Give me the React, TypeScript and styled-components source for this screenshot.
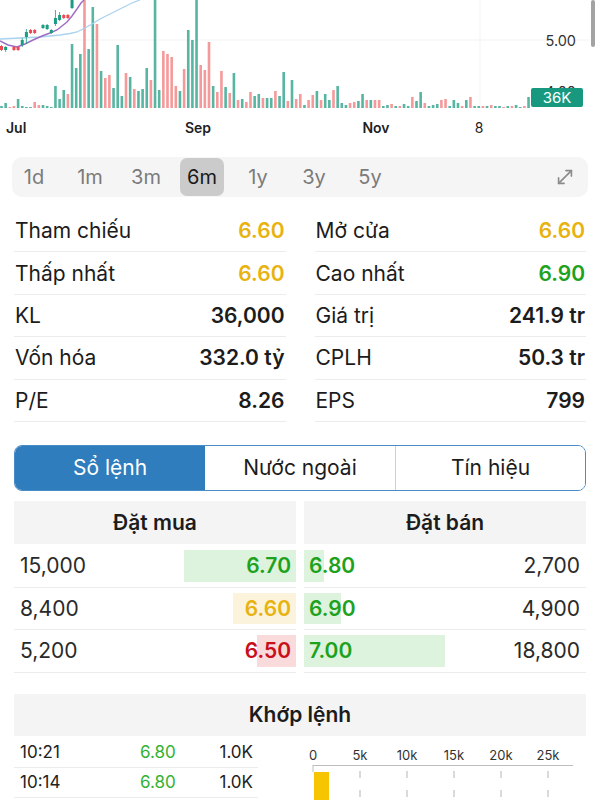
import React from "react";
import styled, { createGlobalStyle } from "styled-components";
import { MoveDiagonal } from "lucide-react";

const GlobalStyle = createGlobalStyle`
  html, body { margin: 0; padding: 0; background: #ffffff; }
  body { font-family: Inter, "Noto Sans", "Liberation Sans", sans-serif; color: #1c1c1c; }
  * { box-sizing: border-box; }
`;

const C = {
  yellow: "#e8b20f",
  green: "#1ea21e",
  red: "#c8101c",
  text: "#1c1c1c",
  line: "#ececec",
  head: "#f4f4f4",
  blue: "#2f7dbd",
};

const Page = styled.div`
  width: 600px;
  display: flex;
  flex-direction: column;
`;

/* ---------- Chart ---------- */
const ChartWrap = styled.div`
  position: relative;
  height: 145px;
`;

const VolBadge = styled.div`
  position: absolute;
  left: 531px;
  top: 88px;
  width: 52px;
  height: 19px;
  background: #18997f;
  color: #ffffff;
  border-radius: 2px;
  font-size: 15px;
  line-height: 19px;
  text-align: center;
`;

const ScrollThumb = styled.div`
  position: absolute;
  left: 591px;
  top: 0;
  width: 4px;
  height: 47px;
  border-radius: 2px;
  background: #a3a3a3;
`;

type Bar = [number, "g" | "r"];
const VOL: Bar[] = [
  [2, "g"], [5, "g"], [1, "r"], [2, "r"], [9, "g"], [2, "g"], [1, "g"], [1, "g"], [6, "r"], [3, "r"], [3, "g"], [2, "g"], [1, "g"],
  [22, "g"], [9, "g"], [18, "g"], [14, "r"], [64, "g"], [40, "g"], [54, "g"], [130, "r"], [59, "g"], [101, "g"],
  [84, "r"], [37, "g"], [30, "r"], [33, "r"], [20, "g"], [63, "g"], [12, "g"], [35, "r"], [31, "g"], [19, "r"],
  [17, "g"], [19, "g"], [40, "g"], [28, "r"], [130, "g"], [18, "g"], [57, "r"], [54, "r"], [51, "r"], [22, "r"],
  [17, "g"], [39, "r"], [78, "g"], [68, "g"], [130, "g"], [43, "r"], [38, "r"], [66, "r"], [22, "g"], [16, "r"],
  [37, "r"], [21, "g"], [15, "r"], [35, "g"], [8, "r"], [9, "g"], [6, "r"], [16, "r"], [12, "g"], [14, "g"],
  [10, "r"], [10, "g"], [10, "g"], [17, "r"], [12, "g"], [36, "g"], [7, "r"], [28, "g"], [9, "r"], [14, "r"],
  [3, "g"], [8, "r"], [13, "r"], [17, "g"], [8, "r"], [14, "g"], [8, "g"], [18, "r"], [22, "g"], [5, "g"],
  [3, "g"], [5, "r"], [6, "r"], [7, "g"], [14, "g"], [8, "r"], [8, "g"], [8, "r"], [8, "r"], [2, "g"],
  [3, "g"], [4, "r"], [2, "g"], [2, "r"], [4, "g"], [2, "g"], [11, "r"], [7, "g"], [16, "g"], [5, "r"],
  [2, "g"], [3, "g"], [4, "g"], [8, "r"], [9, "r"], [2, "g"], [8, "g"], [5, "g"], [2, "r"], [8, "g"],
  [11, "r"], [2, "g"], [2, "g"], [2, "r"], [2, "g"], [3, "r"], [2, "g"], [2, "g"], [1, "r"], [2, "g"],
  [2, "r"], [3, "g"], [1, "g"], [2, "r"], [11, "g"],
];

type Candle = { i: number; o: number; c: number; h: number; l: number; up: boolean };
const CANDLES: Candle[] = [
  { i: 0, o: 46, c: 50, h: 45, l: 51, up: false },
  { i: 1, o: 50, c: 47, h: 46, l: 52, up: true },
  { i: 3, o: 47, c: 50, h: 46, l: 51, up: false },
  { i: 4, o: 47, c: 50, h: 46, l: 51, up: false },
  { i: 5, o: 45, c: 40, h: 38, l: 47, up: true },
  { i: 6, o: 37, c: 32, h: 29, l: 44, up: true },
  { i: 7, o: 30, c: 33, h: 29, l: 34, up: false },
  { i: 8, o: 30, c: 33, h: 29, l: 34, up: false },
  { i: 10, o: 28, c: 25, h: 24, l: 29, up: true },
  { i: 11, o: 29, c: 25, h: 24, l: 30, up: true },
  { i: 12, o: 33, c: 30, h: 29, l: 34, up: true },
  { i: 13, o: 24, c: 18, h: 10, l: 26, up: true },
  { i: 14, o: 20, c: 15, h: 12, l: 21, up: true },
  { i: 15, o: 15, c: 18, h: 14, l: 19, up: false },
  { i: 16, o: 15, c: 18, h: 14, l: 19, up: false },
  { i: 17, o: 8, c: 0, h: 0, l: 9, up: true },
];

const bx = (i: number) => 1.5 + i * 4.15;

const PriceChart: React.FC = () => (
  <svg width="600" height="145" viewBox="0 0 600 145">
    <line x1="0" y1="40" x2="590" y2="40" stroke="#f3f3f3" strokeWidth="1" />
    <line x1="480" y1="0" x2="480" y2="108" stroke="#f3f3f3" strokeWidth="1" />
    {VOL.map(([h, c], i) => (
      <rect
        key={i}
        x={bx(i) - 1.3}
        y={108 - h}
        width={2.6}
        height={h}
        fill={c === "g" ? "#58b5a2" : "#f59a9a"}
      />
    ))}
    <polyline
      points="0,39 10,38.5 20,38 30,37.5 40,37 50,36 60,35 70,33.5 77,32 85,28 92,24 100,19 108,15 116,11 124,7 132,3 140,0"
      fill="none"
      stroke="#a9d3ef"
      strokeWidth="1.3"
    />
    <polyline
      points="0,41 8,45 17,47 25,44 33,40 42,36 50,33 57,30 62,26 67,22 72,16 77,9 81,3 84,0"
      fill="none"
      stroke="#9b6cc3"
      strokeWidth="1.4"
    />
    {CANDLES.map((k, n) => {
      const x = bx(k.i);
      const col = k.up ? "#1c9c80" : "#ee4a52";
      const top = Math.min(k.o, k.c);
      const hgt = Math.max(Math.abs(k.o - k.c), 1.5);
      return (
        <g key={n}>
          <line x1={x} y1={k.h} x2={x} y2={k.l} stroke={col} strokeWidth="0.8" />
          <rect x={x - 1.5} y={top} width={3} height={hgt} fill={col} />
        </g>
      );
    })}
    <text x="576" y="45.5" textAnchor="end" fontFamily="Inter, sans-serif" fontSize="14.5" fill="#333">5.00</text>
    <text x="576" y="97" textAnchor="end" fontFamily="Inter, sans-serif" fontSize="14.5" fill="#333">4.00</text>
    <g fontFamily="Inter, sans-serif" fontSize="14" fill="#1f1f1f">
      <text x="6" y="133" fontWeight="600">Jul</text>
      <text x="198" y="133" fontWeight="600" textAnchor="middle">Sep</text>
      <text x="376" y="133" fontWeight="600" textAnchor="middle">Nov</text>
      <text x="479" y="133" textAnchor="middle">8</text>
    </g>
  </svg>
);

/* ---------- Period bar ---------- */
const PeriodBar = styled.div`
  margin: 12px 12px 0 12px;
  height: 40px;
  border-radius: 10px;
  background: #f5f5f5;
  display: flex;
  align-items: center;
  gap: 12px;
  padding-right: 12px;
`;

const PeriodItem = styled.div<{ $active?: boolean }>`
  width: 44px;
  height: 38px;
  border-radius: 7px;
  display: flex;
  align-items: center;
  justify-content: center;
  font-size: 20px;
  color: ${(p) => (p.$active ? "#1a1a1a" : "#7b7b7b")};
  background: ${(p) => (p.$active ? "#cbcbcb" : "transparent")};
`;

const Spacer = styled.div`
  flex: 1;
`;

const ExpandBtn = styled.div`
  display: flex;
  align-items: center;
  color: #8c8c8c;
`;

/* ---------- Stats ---------- */
const StatsGrid = styled.div`
  margin-top: 13px;
  padding: 0 14px;
  display: grid;
  grid-template-columns: 1fr 1fr;
  column-gap: 29px;
`;

const StatRow = styled.div`
  height: 42.4px;
  display: flex;
  align-items: center;
  justify-content: space-between;
  border-bottom: 1px solid ${C.line};
  padding: 0 1px;
  font-size: 21px;
`;

const StatLabel = styled.span`
  color: ${C.text};
`;

const StatValue = styled.span<{ $color?: string }>`
  font-weight: 600;
  color: ${(p) => p.$color || C.text};
`;

/* ---------- Tabs ---------- */
const Tabs = styled.div`
  margin: 23px 14px 0 14px;
  height: 46px;
  border: 1px solid #4a8cc6;
  border-radius: 8px;
  overflow: hidden;
  display: grid;
  grid-template-columns: 190px 190px 1fr;
`;

const Tab = styled.div<{ $active?: boolean; $divider?: boolean }>`
  display: flex;
  align-items: center;
  justify-content: center;
  font-size: 21px;
  color: ${(p) => (p.$active ? "#ffffff" : C.text)};
  background: ${(p) => (p.$active ? C.blue : "#ffffff")};
  border-left: ${(p) => (p.$divider ? "1px solid #cfcfcf" : "none")};
`;

/* ---------- Order book ---------- */
const Book = styled.div`
  margin-top: 10px;
  padding: 0 14px;
  display: grid;
  grid-template-columns: 1fr 1fr;
  column-gap: 8px;
`;

const BookSide = styled.div`
  display: flex;
  flex-direction: column;
`;

const HeadCell = styled.div`
  height: 43px;
  margin-bottom: 1px;
  background: ${C.head};
  display: flex;
  align-items: center;
  justify-content: center;
  font-size: 21px;
  font-weight: 600;
  color: ${C.text};
`;

const BookRow = styled.div<{ $side: "buy" | "sell" }>`
  position: relative;
  height: 42.6px;
  border-bottom: 1px solid ${C.line};
  display: flex;
  align-items: center;
  justify-content: space-between;
  flex-direction: ${(p) => (p.$side === "buy" ? "row" : "row-reverse")};
  padding: ${(p) => (p.$side === "buy" ? "0 5px 0 6px" : "0 6px 0 5px")};
  font-size: 21px;
`;

const DepthBar = styled.div<{ $side: "buy" | "sell"; $tone: string }>`
  position: absolute;
  top: 5px;
  bottom: 5px;
  ${(p) => (p.$side === "buy" ? "right: 0;" : "left: 0;")}
  background: ${(p) => p.$tone};
`;

const Qty = styled.span`
  position: relative;
  color: #2a2a2a;
`;

const BookPrice = styled.span<{ $color: string }>`
  position: relative;
  font-weight: 600;
  color: ${(p) => p.$color};
`;

/* ---------- Matched ---------- */
const MatchHead = styled.div`
  margin: 21px 14px 0 14px;
  height: 42px;
  background: ${C.head};
  display: flex;
  align-items: center;
  justify-content: center;
  font-size: 21px;
  font-weight: 600;
  color: ${C.text};
`;

const MatchBody = styled.div`
  margin-top: 2px;
  padding-left: 14px;
  display: flex;
  gap: 42px;
`;

const TradeList = styled.div`
  width: 244px;
  display: flex;
  flex-direction: column;
`;

const TradeRow = styled.div`
  height: 30px;
  border-bottom: 1px solid ${C.line};
  display: grid;
  grid-template-columns: 120px 1fr auto;
  align-items: center;
  padding: 0 5px 0 6px;
  font-size: 17px;
  color: #222;
`;

const TradePrice = styled.span`
  color: #33b233;
`;

const VOLUME_TICKS = ["0", "5k", "10k", "15k", "20k", "25k"];

const VolumeAxis: React.FC<{ total: number }> = ({ total }) => {
  const x0 = 13;
  const step = 47;
  const w = (total / 5000) * step;
  return (
    <svg width="286" height="62" viewBox="0 0 286 62">
      {VOLUME_TICKS.map((t, i) => (
        <g key={t}>
          <text
            x={x0 + i * step}
            y="22"
            textAnchor="middle"
            fontFamily="Inter, sans-serif"
            fontSize="13"
            fill="#333"
          >
            {t}
          </text>
          {i > 0 && (
            <line
              x1={x0 + i * step}
              y1="33"
              x2={x0 + i * step}
              y2="62"
              stroke="#b5b5b5"
              strokeWidth="1"
              strokeDasharray="7 12"
            />
          )}
        </g>
      ))}
      <line x1={x0} y1="27.5" x2="273" y2="27.5" stroke="#bdbdbd" strokeWidth="1" />
      <line x1={x0} y1="27" x2={x0} y2="34" stroke="#bdbdbd" strokeWidth="1" />
      <rect x={x0 + 1} y="34" width={Math.max(w, 15)} height="28" fill="#f7c500" />
    </svg>
  );
};

const STATS: [string, string, string?][][] = [
  [["Tham chiếu", "6.60", C.yellow], ["Mở cửa", "6.60", C.yellow]],
  [["Thấp nhất", "6.60", C.yellow], ["Cao nhất", "6.90", C.green]],
  [["KL", "36,000"], ["Giá trị", "241.9 tr"]],
  [["Vốn hóa", "332.0 tỷ"], ["CPLH", "50.3 tr"]],
  [["P/E", "8.26"], ["EPS", "799"]],
];

const BUY = [
  { qty: 15000, price: "6.70", color: C.green, tone: "#ddf3dd" },
  { qty: 8400, price: "6.60", color: C.yellow, tone: "#fbf3dc" },
  { qty: 5200, price: "6.50", color: C.red, tone: "#fadbdb" },
];

const SELL = [
  { qty: 2700, price: "6.80", color: C.green, tone: "#ddf3dd" },
  { qty: 4900, price: "6.90", color: C.green, tone: "#ddf3dd" },
  { qty: 18800, price: "7.00", color: C.green, tone: "#ddf3dd" },
];

const TRADES = [
  { t: "10:21", p: "6.80", v: "1.0K" },
  { t: "10:14", p: "6.80", v: "1.0K" },
];

const fmt = (n: number) => n.toLocaleString("en-US");

export default function App() {
  const periods = ["1d", "1m", "3m", "6m", "1y", "3y", "5y"];
  return (
    <>
      <GlobalStyle />
      <Page>
        <ChartWrap>
          <PriceChart />
          <VolBadge>36K</VolBadge>
          <ScrollThumb />
        </ChartWrap>

        <PeriodBar>
          {periods.map((p) => (
            <PeriodItem key={p} $active={p === "6m"}>
              {p}
            </PeriodItem>
          ))}
          <Spacer />
          <ExpandBtn>
            <MoveDiagonal size={22} strokeWidth={1.8} />
          </ExpandBtn>
        </PeriodBar>

        <StatsGrid>
          {STATS.map((row) =>
            row.map(([label, value, color]) => (
              <StatRow key={label}>
                <StatLabel>{label}</StatLabel>
                <StatValue $color={color}>{value}</StatValue>
              </StatRow>
            ))
          )}
        </StatsGrid>

        <Tabs>
          <Tab $active>Sổ lệnh</Tab>
          <Tab>Nước ngoài</Tab>
          <Tab $divider>Tín hiệu</Tab>
        </Tabs>

        <Book>
          <BookSide>
            <HeadCell>Đặt mua</HeadCell>
            {BUY.map((r) => (
              <BookRow key={r.price} $side="buy">
                <DepthBar $side="buy" $tone={r.tone} style={{ width: r.qty * 0.0075 }} />
                <Qty>{fmt(r.qty)}</Qty>
                <BookPrice $color={r.color}>{r.price}</BookPrice>
              </BookRow>
            ))}
          </BookSide>
          <BookSide>
            <HeadCell>Đặt bán</HeadCell>
            {SELL.map((r) => (
              <BookRow key={r.price} $side="sell">
                <DepthBar $side="sell" $tone={r.tone} style={{ width: r.qty * 0.0075 }} />
                <Qty>{fmt(r.qty)}</Qty>
                <BookPrice $color={r.color}>{r.price}</BookPrice>
              </BookRow>
            ))}
          </BookSide>
        </Book>

        <MatchHead>Khớp lệnh</MatchHead>
        <MatchBody>
          <TradeList>
            {TRADES.map((t) => (
              <TradeRow key={t.t}>
                <span>{t.t}</span>
                <TradePrice>{t.p}</TradePrice>
                <span>{t.v}</span>
              </TradeRow>
            ))}
          </TradeList>
          <VolumeAxis total={1500} />
        </MatchBody>
      </Page>
    </>
  );
}
